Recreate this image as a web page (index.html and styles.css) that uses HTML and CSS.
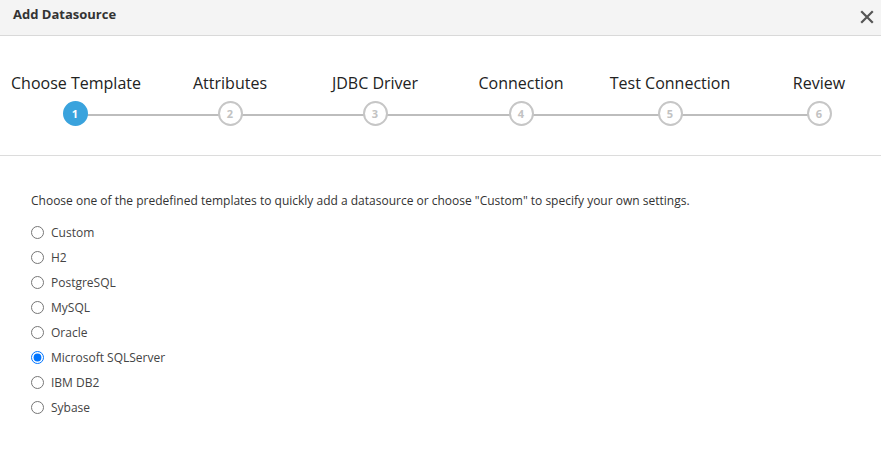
FILE: index.html
```html
<!DOCTYPE html>
<html>
<head>
<meta charset="utf-8">
<link rel="stylesheet" href="styles.css">
</head>
<body>
<div class="dialog">
  <div class="header">
    <div class="title">Add Datasource</div>
    <svg class="close" width="14" height="14" viewBox="0 0 14 14"><path d="M2 2 L12 12 M12 2 L2 12" stroke="#555" stroke-width="2.2" stroke-linecap="square" fill="none"/></svg>
  </div>
  <div class="steps">
    <div class="step"><div class="label">Choose Template</div><div class="circle active">1</div></div>
    <div class="step"><div class="label">Attributes</div><div class="circle">2</div></div>
    <div class="step"><div class="label">JDBC Driver</div><div class="circle">3</div></div>
    <div class="step"><div class="label">Connection</div><div class="circle">4</div></div>
    <div class="step"><div class="label">Test Connection</div><div class="circle">5</div></div>
    <div class="step"><div class="label">Review</div><div class="circle">6</div></div>
  </div>
  <div class="content">
    <p class="intro">Choose one of the predefined templates to quickly add a datasource or choose "Custom" to specify your own settings.</p>
    <div class="options">
      <label class="option"><input type="radio" name="t"> Custom</label>
      <label class="option"><input type="radio" name="t"> H2</label>
      <label class="option"><input type="radio" name="t"> PostgreSQL</label>
      <label class="option"><input type="radio" name="t"> MySQL</label>
      <label class="option"><input type="radio" name="t"> Oracle</label>
      <label class="option"><input type="radio" name="t" checked> Microsoft SQLServer</label>
      <label class="option"><input type="radio" name="t"> IBM DB2</label>
      <label class="option"><input type="radio" name="t"> Sybase</label>
    </div>
  </div>
</div>
</body>
</html>
```
FILE: styles.css
```css
html, body {
  margin: 0;
  padding: 0;
  background: #fff;
  overflow: hidden;
}
body {
  font-family: "Open Sans", "Liberation Sans", sans-serif;
  color: #333;
}
.dialog {
  width: 881px;
  height: 468px;
}
.header {
  height: 36px;
  box-sizing: border-box;
  background: #f4f4f4;
  border-bottom: 1px solid #d9d9d9;
  display: flex;
  align-items: center;
  justify-content: space-between;
  padding: 0 7px 7px 13px;
}
.title {
  font-size: 13px;
  font-weight: 700;
  color: #333;
}
.close {
  margin-top: 5px;
}
.steps {
  position: relative;
  display: grid;
  grid-template-columns: 152px 156px 134px 158px 140px 158px;
  padding: 36px 0 29px;
  border-bottom: 1px solid #dcdcdc;
}
.steps::before {
  content: "";
  position: absolute;
  top: 78px;
  left: 75px;
  right: 62px;
  height: 2px;
  background: #bdbdbd;
}
.step {
  display: flex;
  flex-direction: column;
  align-items: center;
  gap: 7px;
}
.label {
  font-size: 16px;
  line-height: 22px;
  color: #222;
  white-space: nowrap;
}
.circle {
  position: relative;
  z-index: 1;
  width: 25px;
  height: 25px;
  box-sizing: border-box;
  border-radius: 50%;
  border: 2px solid #c6c6c6;
  background: #fff;
  color: #c2c2c2;
  font-size: 11px;
  font-weight: 700;
  display: flex;
  align-items: center;
  justify-content: center;
}
.step:first-child .circle {
  margin-left: -2px;
}
.circle.active {
  background: #3aa3dd;
  border-color: #3aa3dd;
  color: #fff;
}
.content {
  padding: 0 31px;
}
.intro {
  margin: 36px 0 11px;
  font-size: 12px;
  line-height: 17px;
  color: #333;
}
.options {
  display: flex;
  flex-direction: column;
}
.option {
  height: 25px;
  display: flex;
  align-items: center;
  gap: 7px;
  font-size: 12px;
  color: #444;
}
.option input {
  margin: 0;
  width: 13px;
  height: 13px;
}
```
